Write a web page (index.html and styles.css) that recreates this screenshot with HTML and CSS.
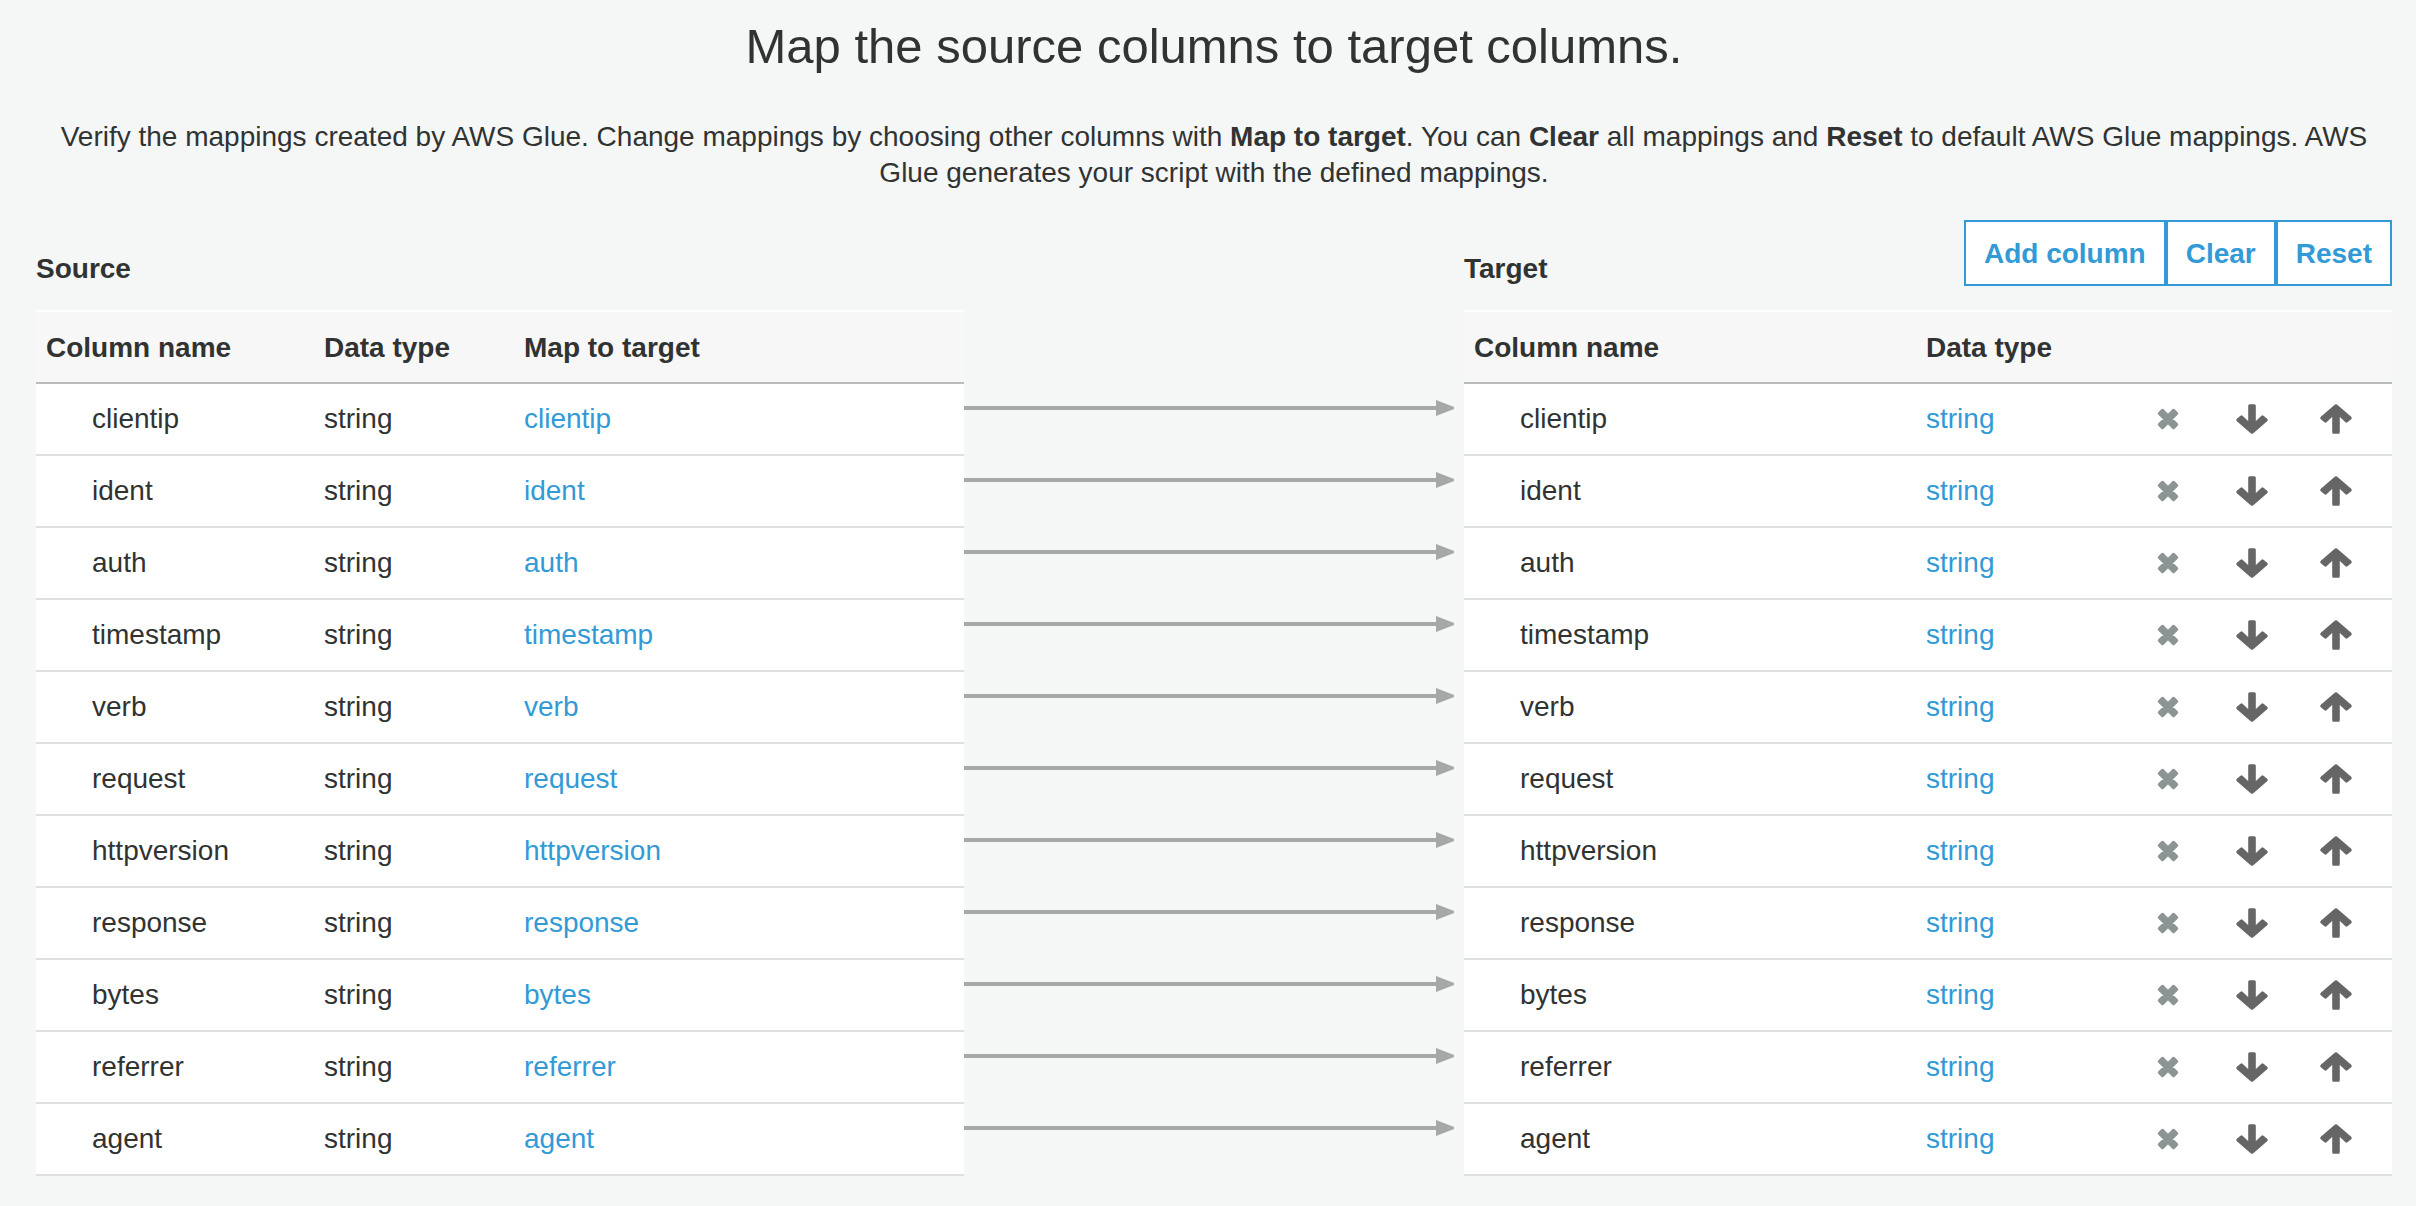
FILE: index.html
```html
<!DOCTYPE html>
<html lang="en">
<head>
<meta charset="utf-8">
<title>Map the source columns to target columns</title>
<link rel="stylesheet" href="styles.css">
</head>
<body>
<svg class="sprite" aria-hidden="true">
  <symbol id="remove" viewBox="0 0 22 22"><path d="M5.500 2 11 7.500 16.500 2 20 5.500 14.500 11 20 16.500 16.500 20 11 14.500 5.500 20 2 16.500 7.500 11 2 5.500Z" fill="#8d9494" stroke="#8d9494" stroke-width="2.500" stroke-linejoin="round"/></symbol>
  <symbol id="down" viewBox="0 0 32 30"><path d="M13.700 1.700H18.300V20.500L26.500 12.800 30.200 16 16 28.300 1.800 16 5.500 12.800 13.700 20.500Z" fill="#666" stroke="#666" stroke-width="3" stroke-linejoin="round"/></symbol>
  <symbol id="up" viewBox="0 0 32 30"><path d="M13.700 28.300H18.300V9.500L26.500 17.200 30.200 14 16 1.700 1.800 14 5.500 17.200 13.700 9.500Z" fill="#666" stroke="#666" stroke-width="3" stroke-linejoin="round"/></symbol>
  <symbol id="head" viewBox="0 0 18 16"><path d="M0 0 18 7V9L0 16Z" fill="#a6a8a7"/></symbol>
</svg>
<main class="page">
  <h1 class="title">Map the source columns to target columns.</h1>
  <p class="intro">Verify the mappings created by AWS Glue. Change mappings by choosing other columns with <b>Map to target</b>. You can <b>Clear</b> all mappings and <b>Reset</b> to default AWS Glue mappings. AWS Glue generates your script with the defined mappings.</p>
  <div class="mapping">
    <section class="panel">
      <div class="bar"><h2 class="heading">Source</h2></div>
      <table class="grid">
        <colgroup><col class="c-source"><col class="c-type"><col></colgroup>
        <thead><tr><th>Column name</th><th>Data type</th><th>Map to target</th></tr></thead>
        <tbody>
          <tr><td class="name">clientip</td><td>string</td><td><a href="#">clientip</a></td></tr>
          <tr><td class="name">ident</td><td>string</td><td><a href="#">ident</a></td></tr>
          <tr><td class="name">auth</td><td>string</td><td><a href="#">auth</a></td></tr>
          <tr><td class="name">timestamp</td><td>string</td><td><a href="#">timestamp</a></td></tr>
          <tr><td class="name">verb</td><td>string</td><td><a href="#">verb</a></td></tr>
          <tr><td class="name">request</td><td>string</td><td><a href="#">request</a></td></tr>
          <tr><td class="name">httpversion</td><td>string</td><td><a href="#">httpversion</a></td></tr>
          <tr><td class="name">response</td><td>string</td><td><a href="#">response</a></td></tr>
          <tr><td class="name">bytes</td><td>string</td><td><a href="#">bytes</a></td></tr>
          <tr><td class="name">referrer</td><td>string</td><td><a href="#">referrer</a></td></tr>
          <tr><td class="name">agent</td><td>string</td><td><a href="#">agent</a></td></tr>
        </tbody>
      </table>
    </section>
    <div class="links" aria-hidden="true">
      <div class="link"><span class="line"></span><svg class="head"><use href="#head"/></svg></div>
      <div class="link"><span class="line"></span><svg class="head"><use href="#head"/></svg></div>
      <div class="link"><span class="line"></span><svg class="head"><use href="#head"/></svg></div>
      <div class="link"><span class="line"></span><svg class="head"><use href="#head"/></svg></div>
      <div class="link"><span class="line"></span><svg class="head"><use href="#head"/></svg></div>
      <div class="link"><span class="line"></span><svg class="head"><use href="#head"/></svg></div>
      <div class="link"><span class="line"></span><svg class="head"><use href="#head"/></svg></div>
      <div class="link"><span class="line"></span><svg class="head"><use href="#head"/></svg></div>
      <div class="link"><span class="line"></span><svg class="head"><use href="#head"/></svg></div>
      <div class="link"><span class="line"></span><svg class="head"><use href="#head"/></svg></div>
      <div class="link"><span class="line"></span><svg class="head"><use href="#head"/></svg></div>
    </div>
    <section class="panel">
      <div class="bar">
        <h2 class="heading">Target</h2>
        <div class="actions"><button class="btn" type="button">Add column</button><button class="btn" type="button">Clear</button><button class="btn" type="button">Reset</button></div>
      </div>
      <table class="grid">
        <colgroup><col><col class="c-target-type"><col class="c-icon"><col class="c-icon"><col class="c-last"></colgroup>
        <thead><tr><th>Column name</th><th>Data type</th><th></th><th></th><th></th></tr></thead>
        <tbody>
          <tr><td class="name">clientip</td><td><a href="#">string</a></td><td class="tool"><button class="icon" type="button" aria-label="Remove"><svg class="x"><use href="#remove"/></svg></button></td><td class="tool"><button class="icon" type="button" aria-label="Move down"><svg class="arrow"><use href="#down"/></svg></button></td><td class="tool"><button class="icon" type="button" aria-label="Move up"><svg class="arrow"><use href="#up"/></svg></button></td></tr>
          <tr><td class="name">ident</td><td><a href="#">string</a></td><td class="tool"><button class="icon" type="button" aria-label="Remove"><svg class="x"><use href="#remove"/></svg></button></td><td class="tool"><button class="icon" type="button" aria-label="Move down"><svg class="arrow"><use href="#down"/></svg></button></td><td class="tool"><button class="icon" type="button" aria-label="Move up"><svg class="arrow"><use href="#up"/></svg></button></td></tr>
          <tr><td class="name">auth</td><td><a href="#">string</a></td><td class="tool"><button class="icon" type="button" aria-label="Remove"><svg class="x"><use href="#remove"/></svg></button></td><td class="tool"><button class="icon" type="button" aria-label="Move down"><svg class="arrow"><use href="#down"/></svg></button></td><td class="tool"><button class="icon" type="button" aria-label="Move up"><svg class="arrow"><use href="#up"/></svg></button></td></tr>
          <tr><td class="name">timestamp</td><td><a href="#">string</a></td><td class="tool"><button class="icon" type="button" aria-label="Remove"><svg class="x"><use href="#remove"/></svg></button></td><td class="tool"><button class="icon" type="button" aria-label="Move down"><svg class="arrow"><use href="#down"/></svg></button></td><td class="tool"><button class="icon" type="button" aria-label="Move up"><svg class="arrow"><use href="#up"/></svg></button></td></tr>
          <tr><td class="name">verb</td><td><a href="#">string</a></td><td class="tool"><button class="icon" type="button" aria-label="Remove"><svg class="x"><use href="#remove"/></svg></button></td><td class="tool"><button class="icon" type="button" aria-label="Move down"><svg class="arrow"><use href="#down"/></svg></button></td><td class="tool"><button class="icon" type="button" aria-label="Move up"><svg class="arrow"><use href="#up"/></svg></button></td></tr>
          <tr><td class="name">request</td><td><a href="#">string</a></td><td class="tool"><button class="icon" type="button" aria-label="Remove"><svg class="x"><use href="#remove"/></svg></button></td><td class="tool"><button class="icon" type="button" aria-label="Move down"><svg class="arrow"><use href="#down"/></svg></button></td><td class="tool"><button class="icon" type="button" aria-label="Move up"><svg class="arrow"><use href="#up"/></svg></button></td></tr>
          <tr><td class="name">httpversion</td><td><a href="#">string</a></td><td class="tool"><button class="icon" type="button" aria-label="Remove"><svg class="x"><use href="#remove"/></svg></button></td><td class="tool"><button class="icon" type="button" aria-label="Move down"><svg class="arrow"><use href="#down"/></svg></button></td><td class="tool"><button class="icon" type="button" aria-label="Move up"><svg class="arrow"><use href="#up"/></svg></button></td></tr>
          <tr><td class="name">response</td><td><a href="#">string</a></td><td class="tool"><button class="icon" type="button" aria-label="Remove"><svg class="x"><use href="#remove"/></svg></button></td><td class="tool"><button class="icon" type="button" aria-label="Move down"><svg class="arrow"><use href="#down"/></svg></button></td><td class="tool"><button class="icon" type="button" aria-label="Move up"><svg class="arrow"><use href="#up"/></svg></button></td></tr>
          <tr><td class="name">bytes</td><td><a href="#">string</a></td><td class="tool"><button class="icon" type="button" aria-label="Remove"><svg class="x"><use href="#remove"/></svg></button></td><td class="tool"><button class="icon" type="button" aria-label="Move down"><svg class="arrow"><use href="#down"/></svg></button></td><td class="tool"><button class="icon" type="button" aria-label="Move up"><svg class="arrow"><use href="#up"/></svg></button></td></tr>
          <tr><td class="name">referrer</td><td><a href="#">string</a></td><td class="tool"><button class="icon" type="button" aria-label="Remove"><svg class="x"><use href="#remove"/></svg></button></td><td class="tool"><button class="icon" type="button" aria-label="Move down"><svg class="arrow"><use href="#down"/></svg></button></td><td class="tool"><button class="icon" type="button" aria-label="Move up"><svg class="arrow"><use href="#up"/></svg></button></td></tr>
          <tr><td class="name">agent</td><td><a href="#">string</a></td><td class="tool"><button class="icon" type="button" aria-label="Remove"><svg class="x"><use href="#remove"/></svg></button></td><td class="tool"><button class="icon" type="button" aria-label="Move down"><svg class="arrow"><use href="#down"/></svg></button></td><td class="tool"><button class="icon" type="button" aria-label="Move up"><svg class="arrow"><use href="#up"/></svg></button></td></tr>
        </tbody>
      </table>
    </section>
  </div>
</main>
</body>
</html>
```
FILE: styles.css
```css
* { box-sizing: border-box; }

body {
  margin: 0;
  background: #f4f7f6;
  color: #303332;
  font-family: "Helvetica Neue", "Liberation Sans", Arial, sans-serif;
  font-size: 28px;
  line-height: 36px;
}

.sprite { display: none; }

.page { padding: 18px 24px 30px 36px; }

.title {
  margin: 0 0 45px;
  font-size: 49px;
  font-weight: 400;
  line-height: 56px;
  text-align: center;
}

.intro {
  margin: 0 0 29px;
  text-align: center;
}

.mapping {
  display: grid;
  grid-template-columns: 1fr 500px 1fr;
}

.bar {
  display: flex;
  justify-content: space-between;
  align-items: flex-end;
  height: 66px;
  margin-bottom: 24px;
}

.heading {
  margin: 0;
  font-size: 28px;
  line-height: 34px;
}

.actions { display: flex; }

.btn {
  height: 66px;
  padding: 2px 18px 0;
  border: 2px solid #329ad6;
  background: #fff;
  color: #329ad6;
  font: bold 28px "Helvetica Neue", "Liberation Sans", Arial, sans-serif;
}

.grid {
  width: 100%;
  table-layout: fixed;
  border-spacing: 0;
}

.c-source { width: 278px; }
.c-type { width: 200px; }
.c-target-type { width: 210px; }
.c-icon { width: 84px; }
.c-last { width: 98px; }

th {
  height: 74px;
  padding: 2px 10px 0;
  border-top: 2px solid #fff;
  border-bottom: 2px solid #b9bbba;
  background: #f7f7f7;
  text-align: left;
}

td {
  height: 72px;
  padding: 0 10px;
  border-bottom: 2px solid #dfe1e0;
  background: #fff;
}

.name { padding-left: 56px; }

a {
  color: #329ad6;
  text-decoration: none;
}

.tool { padding: 0; }

.icon {
  display: flex;
  justify-content: center;
  align-items: center;
  width: 84px;
  height: 70px;
  padding: 0;
  border: 0;
  background: none;
}

.x { width: 22px; height: 22px; }
.arrow { width: 32px; height: 30px; }

.links { padding-top: 164px; }

.link {
  display: flex;
  align-items: center;
  height: 48px;
  margin-bottom: 24px;
  padding-right: 10px;
}

.line {
  flex: 1;
  height: 4px;
  background: #a6a8a7;
}

.head { width: 18px; height: 16px; }
```
